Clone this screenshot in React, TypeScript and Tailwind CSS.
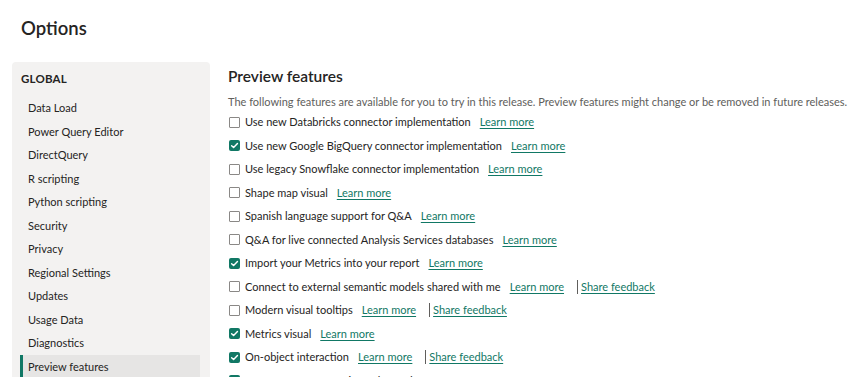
import React from "react";

const navItems = [
  "Data Load",
  "Power Query Editor",
  "DirectQuery",
  "R scripting",
  "Python scripting",
  "Security",
  "Privacy",
  "Regional Settings",
  "Updates",
  "Usage Data",
  "Diagnostics",
  "Preview features",
];

type Feature = { label: string; checked: boolean; feedback?: boolean };

const features: Feature[] = [
  { label: "Use new Databricks connector implementation", checked: false },
  { label: "Use new Google BigQuery connector implementation", checked: true },
  { label: "Use legacy Snowflake connector implementation", checked: false },
  { label: "Shape map visual", checked: false },
  { label: "Spanish language support for Q&A", checked: false },
  { label: "Q&A for live connected Analysis Services databases", checked: false },
  { label: "Import your Metrics into your report", checked: true },
  { label: "Connect to external semantic models shared with me", checked: false, feedback: true },
  { label: "Modern visual tooltips", checked: false, feedback: true },
  { label: "Metrics visual", checked: true },
  { label: "On-object interaction", checked: true, feedback: true },
  { label: "Store PBIX reports using enhanced PBIR format", checked: true },
];

function Checkbox({ checked }: { checked: boolean }) {
  if (checked) {
    return (
      <span className="flex h-[11px] w-[11px] shrink-0 items-center justify-center rounded-[2px] bg-[#117865]">
        <svg width="9" height="9" viewBox="0 0 10 10" fill="none">
          <path d="M1.8 5.2 L4 7.3 L8.3 2.8" stroke="white" strokeWidth="1.6" strokeLinecap="round" strokeLinejoin="round" />
        </svg>
      </span>
    );
  }
  return <span className="h-[11px] w-[11px] shrink-0 rounded-[1px] border border-[#8a8886] bg-white" />;
}

export default function App() {
  return (
    <div
      className="h-[377px] w-[854px] overflow-hidden bg-white text-[#252423]"
      style={{ fontFamily: '"Segoe UI", Lato, "Noto Sans", sans-serif' }}
    >
      <div className="pl-[21px] pt-[14px] text-[18.5px] font-semibold leading-[28px] text-[#252423]">Options</div>
      <div className="mt-[20px] flex">
        <div className="ml-[12px] h-[400px] w-[198px] shrink-0 rounded-t-[4px] bg-[#f3f2f1] pt-[8px]">
          <div className="pl-[9px] text-[11.5px] font-bold leading-[18px] tracking-[0.2px] text-[#252423]">GLOBAL</div>
          <div className="mt-[8px] flex flex-col pl-[8px] pr-[10px]">
            {navItems.map((item) => {
              const active = item === "Preview features";
              return (
                <div
                  key={item}
                  className={
                    active
                      ? "flex h-[23.5px] items-center border-l-[3px] border-[#117865] bg-[#e6e5e4] pl-[5px] pt-[1px] text-[11px] text-[#252423]"
                      : "flex h-[23.5px] items-center pl-[8px] pt-[1px] text-[11px] text-[#252423]"
                  }
                >
                  {item}
                </div>
              );
            })}
          </div>
        </div>
        <div className="ml-[18px] flex min-w-0 flex-1 flex-col">
          <div className="mt-[4px] text-[15.5px] font-semibold leading-[20px] text-[#252423]">Preview features</div>
          <div className="mt-[9px] whitespace-nowrap text-[11px] leading-[14px] text-[#605e5c]">
            The following features are available for you to try in this release. Preview features might change or be removed in future releases.
          </div>
          <div className="mt-[1px] flex flex-col">
            {features.map((f) => (
              <div key={f.label} className="flex h-[23.5px] items-center whitespace-nowrap pl-[1px] pt-[1px] text-[11px]">
                <Checkbox checked={f.checked} />
                <span className="ml-[5px] text-[#252423]">{f.label}</span>
                <span className="ml-[9px] text-[#117865] underline underline-offset-2">Learn more</span>
                {f.feedback && (
                  <>
                    <span className="ml-[13px] h-[14px] w-px bg-[#605e5c]" />
                    <span className="ml-[3px] text-[#117865] underline underline-offset-2">Share feedback</span>
                  </>
                )}
              </div>
            ))}
          </div>
        </div>
      </div>
    </div>
  );
}
